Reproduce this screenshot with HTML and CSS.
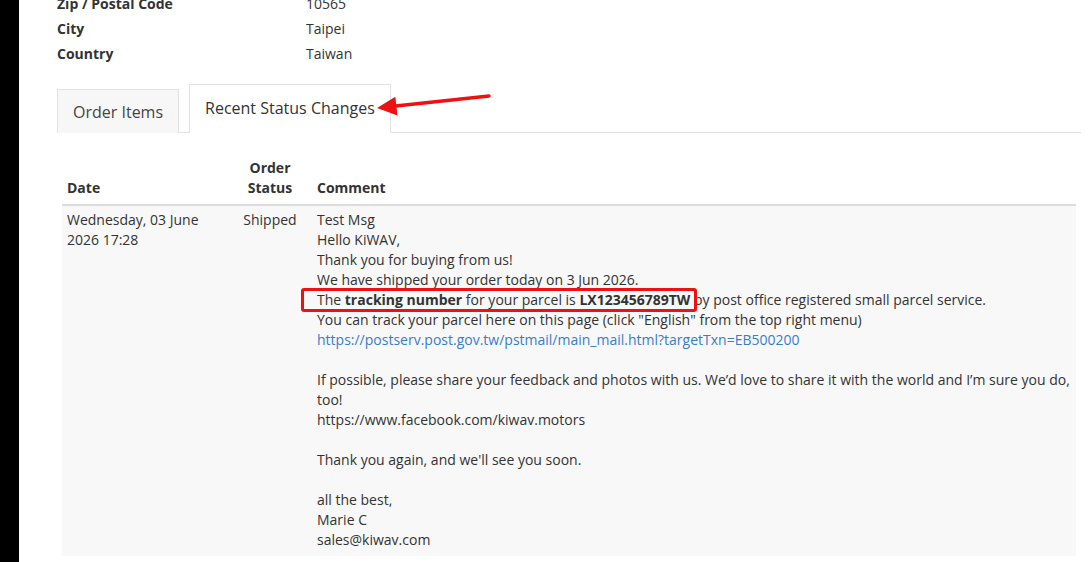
FILE: index.html
```html
<!DOCTYPE html>
<html>
<head>
<meta charset="utf-8">
<link rel="stylesheet" href="styles.css">
</head>
<body>
<div class="layout">
  <div class="sidebar"></div>
  <main class="main">
    <dl class="info">
      <div class="info-row"><dt>Zip / Postal Code</dt><dd>10565</dd></div>
      <div class="info-row"><dt>City</dt><dd>Taipei</dd></div>
      <div class="info-row"><dt>Country</dt><dd>Taiwan</dd></div>
    </dl>

    <div class="tabs">
      <div class="tab">Order Items</div>
      <div class="tab active">Recent Status Changes</div>
      <svg class="arrow" width="500" height="50" viewBox="0 0 500 50">
        <line x1="334" y1="21.6" x2="432" y2="11" stroke="#ee1111" stroke-width="3.5" stroke-linecap="round"/>
        <polygon points="320,23 340.5,30.5 338.3,11.8" fill="#ee1111"/>
      </svg>
    </div>

    <table class="status-table">
      <thead>
        <tr>
          <th class="c-date">Date</th>
          <th class="c-status">Order Status</th>
          <th class="c-comment">Comment</th>
        </tr>
      </thead>
      <tbody>
        <tr>
          <td class="c-date">Wednesday, 03 June 2026 17:28</td>
          <td class="c-status">Shipped</td>
          <td class="c-comment">
            Test Msg<br>
            Hello KiWAV,<br>
            Thank you for buying from us!<br>
            We have shipped your order today on 3 Jun 2026.<br>
            <span class="highlight">The <b>tracking number</b> for your parcel is <b>LX123456789TW</b></span> by post office registered small parcel service.<br>
            You can track your parcel here on this page (click "English" from the top right menu)<br>
            <a href="#" class="link">https://postserv.post.gov.tw/pstmail/main_mail.html?targetTxn=EB500200</a><br>
            <br>
            If possible, please share your feedback and photos with us. We’d love to share it with the world and I’m sure you do, too!<br>
            https://www.facebook.com/kiwav.motors<br>
            <br>
            Thank you again, and we'll see you soon.<br>
            <br>
            all the best,<br>
            Marie C<br>
            sales@kiwav.com
          </td>
        </tr>
      </tbody>
    </table>
  </main>
</div>
</body>
</html>
```

FILE: styles.css
```css
* { box-sizing: border-box; }

html, body {
  margin: 0;
  padding: 0;
  height: 100%;
  overflow: hidden;
}

body {
  font-family: "Open Sans", "Liberation Sans", sans-serif;
  font-size: 14px;
  color: #333;
  background: #fff;
}

.layout {
  display: flex;
  min-height: 100%;
}

.sidebar {
  width: 19px;
  flex: 0 0 19px;
  background: #000;
}

.main {
  flex: 1;
  padding-left: 38px;
  padding-right: 11px;
}

.info {
  margin: -9px 0 0 0;
}

.info-row {
  display: flex;
  line-height: 25px;
}

.info dt {
  width: 249px;
  font-weight: 700;
  margin: 0;
}

.info dd {
  margin: 0;
}

.tabs {
  position: relative;
  display: flex;
  align-items: flex-end;
  gap: 10px;
  margin-top: 19px;
  height: 48px;
  border-bottom: 1px solid #e2e2e2;
}

.tab {
  font-size: 16px;
  line-height: 22px;
  padding: 11px 15px 10px;
  border: 1px solid #e2e2e2;
  border-bottom: none;
  background: #f7f7f7;
  color: #444;
  margin-bottom: -1px;
  height: 44px;
}

.tab.active {
  background: #fff;
  height: 49px;
  padding-top: 12px;
  color: #333;
}

.arrow {
  position: absolute;
  left: 0;
  top: 0;
  pointer-events: none;
  overflow: visible;
}

.status-table {
  margin: 20px 0 0 5px;
  width: 1014px;
  border-collapse: collapse;
  line-height: 20px;
}

.status-table th {
  font-weight: 700;
  text-align: left;
  vertical-align: bottom;
  padding: 5px 5px 6px;
  border-bottom: 2px solid #dcdcdc;
}

.status-table td {
  vertical-align: top;
  padding: 4px 5px 6px;
  background: #f8f8f8;
}

.c-date { width: 166px; }

.status-table .c-status {
  width: 84px;
  text-align: center;
}

.link {
  color: #3a7cc9;
  text-decoration: none;
}

.highlight {
  position: relative;
  display: inline-block;
}

.highlight::after {
  content: "";
  position: absolute;
  left: -16px;
  right: -7px;
  top: -2px;
  bottom: -2px;
  border: 3px solid #ee1111;
  border-radius: 3px;
}
```
